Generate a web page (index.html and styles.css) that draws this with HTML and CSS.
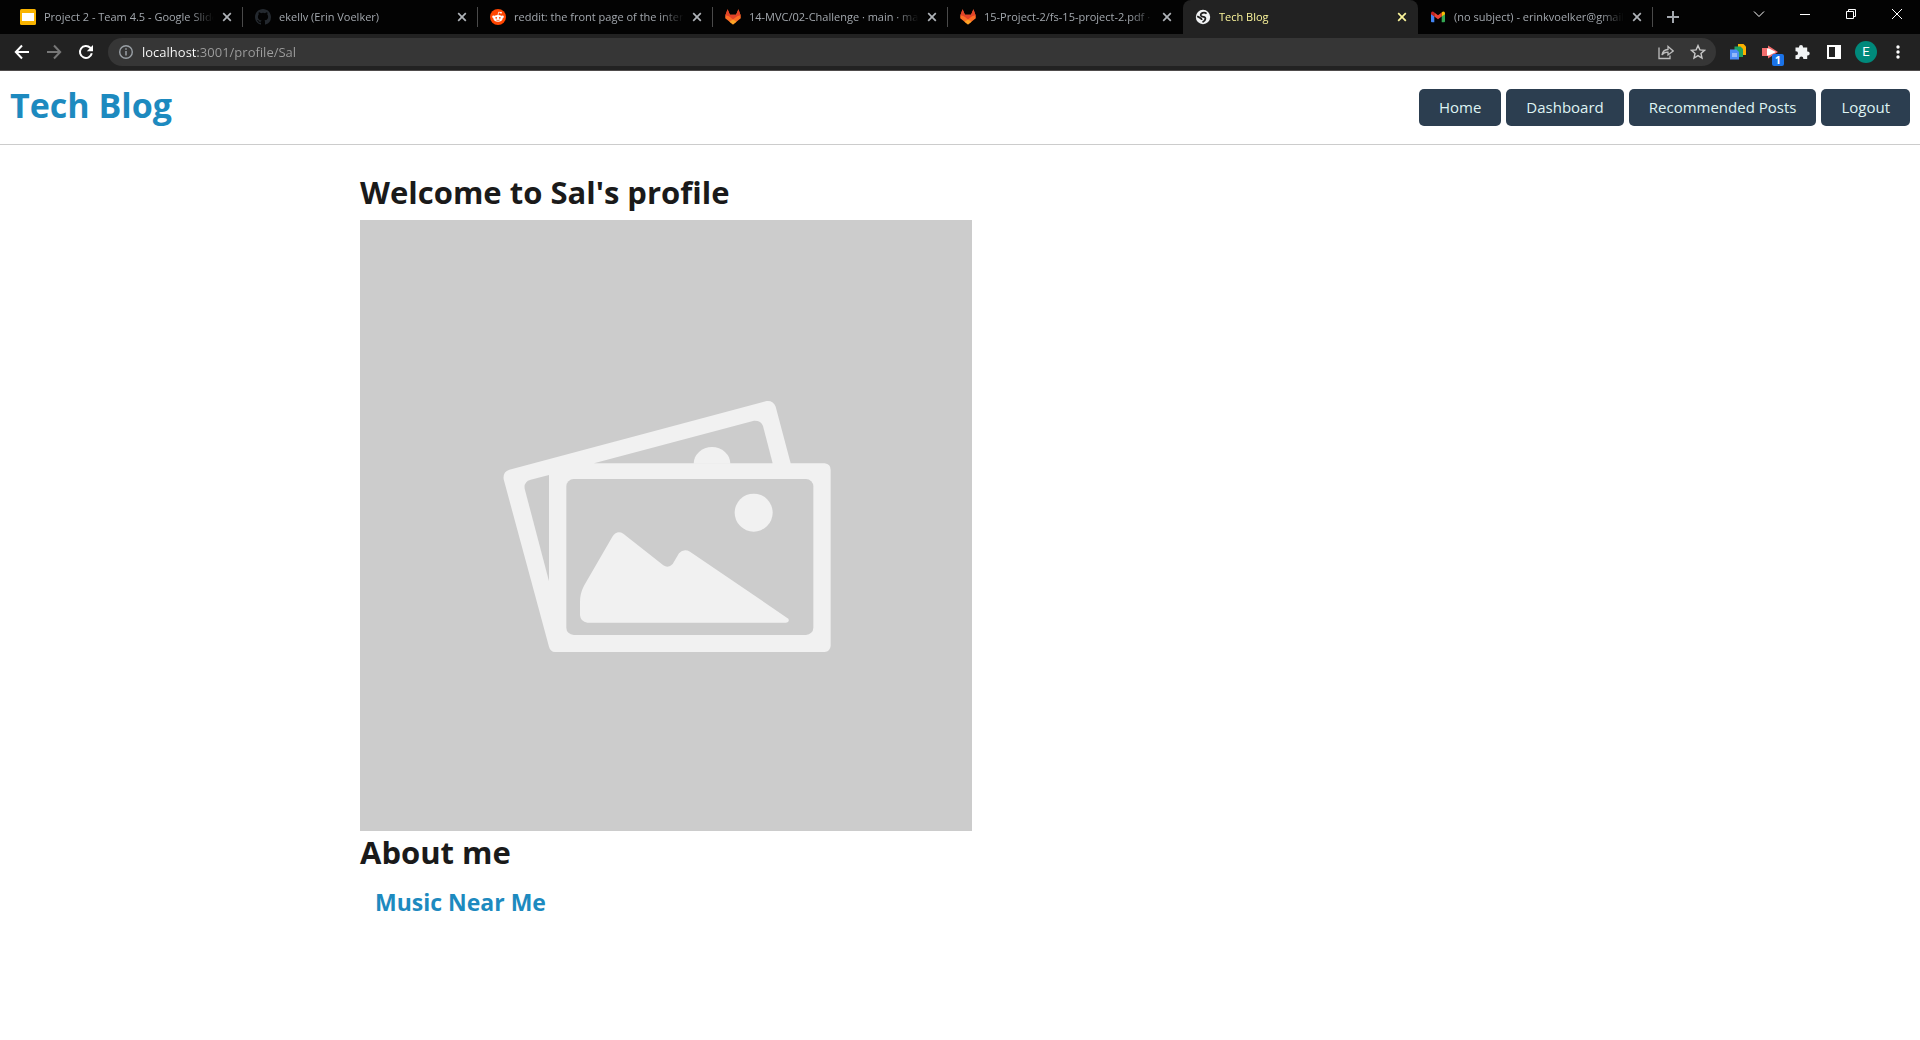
FILE: index.html
```html
<!DOCTYPE html>
<html lang="en">
<head>
<meta charset="utf-8">
<title>Tech Blog</title>
<link rel="stylesheet" href="styles.css">
</head>
<body>
<svg class="defs" aria-hidden="true">
  <symbol id="x" viewBox="0 0 10 10"><path d="M1.2 1.2l7.6 7.6M8.8 1.2L1.2 8.8" fill="none" stroke="currentColor" stroke-width="1.7"/></symbol>
  <symbol id="fox" viewBox="0 0 16 16">
    <path d="M2.6 0.3L0.3 6.5 0.2 9.3 8 15.6l7.8-6.3-.1-2.8L13.4.3l-2.3 5.4H4.9z" fill="#fc6d26"/>
    <path d="M2.6.3L.3 6.5Q3 6 5.3 8.3L8 10.4l2.7-2.1Q13 6 15.7 6.5L13.4.3l-2.3 5.4H4.9z" fill="#e24329"/>
    <path d="M8 10.4l3.6 2.4L8 15.6l-3.600-2.8z" fill="#fca326"/>
  </symbol>
</svg>

<div class="browser">
  <div class="tabstrip">
    <div class="tabs">
      <div class="tab">
        <svg class="favicon" viewBox="0 0 16 16"><rect width="16" height="16" rx="1.500" fill="#f9b400"/><rect x="2" y="4" width="12" height="8" fill="#fff"/></svg>
        <span class="tab-title">Project 2 - Team 4.5 - Google Slides</span>
        <button class="tab-close" aria-label="Close tab"><svg><use href="#x"/></svg></button>
      </div>
      <div class="tab">
        <svg class="favicon" viewBox="0 0 16 16"><path fill="#24292f" d="M8 0C3.580 0 0 3.580 0 8c0 3.540 2.290 6.530 5.470 7.590.4.070.55-.17.55-.38 0-.19-.01-.82-.01-1.490-2.010.37-2.530-.49-2.690-.94-.09-.23-.48-.94-.82-1.130-.28-.15-.68-.52-.01-.53.63-.01 1.080.58 1.230.82.72 1.210 1.870.87 2.330.66.07-.52.28-.87.51-1.070-1.780-.2-3.640-.89-3.640-3.950 0-.87.31-1.590.82-2.150-.08-.2-.36-1.020.08-2.120 0 0 .67-.21 2.200.82a7.500 7.500 0 0 1 4 0c1.530-1.040 2.200-.82 2.200-.82.44 1.100.16 1.920.08 2.120.51.56.82 1.270.82 2.150 0 3.070-1.870 3.750-3.650 3.950.29.25.54.73.54 1.480 0 1.070-.01 1.930-.01 2.200 0 .21.15.46.55.38A8 8 0 0 0 16 8c0-4.420-3.580-8-8-8z"/></svg>
        <span class="tab-title">ekellv (Erin Voelker)</span>
        <button class="tab-close" aria-label="Close tab"><svg><use href="#x"/></svg></button>
      </div>
      <div class="tab">
        <svg class="favicon" viewBox="0 0 16 16"><circle cx="8" cy="8" r="8" fill="#ff4500"/><ellipse cx="8" cy="9.300" rx="4.600" ry="3.400" fill="#fff"/><circle cx="3.400" cy="7.800" r="1.200" fill="#fff"/><circle cx="12.600" cy="7.800" r="1.200" fill="#fff"/><path d="M8 6l.7-2.900 2.200.5" fill="none" stroke="#fff" stroke-width=".8"/><circle cx="11" cy="3.700" r=".9" fill="#fff"/><circle cx="6.200" cy="8.800" r=".9" fill="#ff4500"/><circle cx="9.800" cy="8.800" r=".9" fill="#ff4500"/><path d="M6.200 11q1.800 1 3.600 0" fill="none" stroke="#ff4500" stroke-width=".7"/></svg>
        <span class="tab-title">reddit: the front page of the internet</span>
        <button class="tab-close" aria-label="Close tab"><svg><use href="#x"/></svg></button>
      </div>
      <div class="tab">
        <svg class="favicon"><use href="#fox"/></svg>
        <span class="tab-title">14-MVC/02-Challenge · main · main</span>
        <button class="tab-close" aria-label="Close tab"><svg><use href="#x"/></svg></button>
      </div>
      <div class="tab before-active">
        <svg class="favicon"><use href="#fox"/></svg>
        <span class="tab-title">15-Project-2/fs-15-project-2.pdf · main</span>
        <button class="tab-close" aria-label="Close tab"><svg><use href="#x"/></svg></button>
      </div>
      <div class="tab active">
        <svg class="favicon" viewBox="0 0 16 16"><circle cx="8" cy="8" r="7.200" fill="#f1f3f4"/><path d="M11.600 4.600Q9.800 3 7.600 3.800 5 4.900 6 6.700q.7 1 2.500 1.200 2 .3 1.900 2-.2 2.200-2.900 3.300M2.200 7.200l2.800 1.600q1.600.4 1.800 2.200" fill="none" stroke="#202020" stroke-width="1.800"/></svg>
        <span class="tab-title">Tech Blog</span>
        <button class="tab-close" aria-label="Close tab"><svg><use href="#x"/></svg></button>
      </div>
      <div class="tab">
        <svg class="favicon" viewBox="0 0 16 16"><path d="M1 4v8.300q0 .9.900.9H4.300V7z" fill="#4285f4"/><path d="M15 4v8.300q0 .9-.9.900h-2.400V7z" fill="#34a853"/><path d="M1 4.500q0-1.700 1.500-1.900 1 0 1.800.8v4L1 5.300z" fill="#c5221f"/><path d="M4.300 3.400L8 6.200l3.700-2.800v4L8 10.200 4.300 7.400z" fill="#ea4335"/><path d="M15 4.500q0-1.700-1.500-1.900-1 0-1.800.8v4L15 5.300z" fill="#fbbc04"/></svg>
        <span class="tab-title">(no subject) - erinkvoelker@gmail.com</span>
        <button class="tab-close" aria-label="Close tab"><svg><use href="#x"/></svg></button>
      </div>
      <button class="new-tab" aria-label="New tab"><svg width="12" height="12" viewBox="0 0 12 12"><path d="M6 0v12M0 6h12" stroke="currentColor" stroke-width="2"/></svg></button>
    </div>
    <div class="window-controls">
      <button aria-label="Search tabs"><svg width="12" height="12" viewBox="0 0 12 12"><path d="M1 3.500l5 5 5-5"/></svg></button>
      <button aria-label="Minimize"><svg width="12" height="12" viewBox="0 0 12 12"><path d="M1 6.500h10"/></svg></button>
      <button aria-label="Restore"><svg width="12" height="12" viewBox="0 0 12 12"><path d="M1.500 3.500h7v7h-7zM3.500 3.500v-2h7v7h-2"/></svg></button>
      <button aria-label="Close window"><svg width="12" height="12" viewBox="0 0 12 12"><path d="M1 1l10 10M11 1L1 11"/></svg></button>
    </div>
  </div>

  <div class="toolbar">
    <button class="tool" aria-label="Back"><svg width="16" height="16" viewBox="0 0 16 16"><path d="M15 8H2.500M8 1.500L1.800 8 8 14.500" fill="none" stroke="#fff" stroke-width="2"/></svg></button>
    <button class="tool" aria-label="Forward"><svg width="16" height="16" viewBox="0 0 16 16"><path d="M1 8h12.500M8 1.500L14.200 8 8 14.500" fill="none" stroke="#777" stroke-width="2"/></svg></button>
    <button class="tool" aria-label="Reload"><svg width="16" height="16" viewBox="0 0 16 16"><path d="M13.800 9.300A6 6 0 1 1 12.300 3.800L14 5.500" fill="none" stroke="#fff" stroke-width="2"/><path d="M15 1v6.200H8.800z" fill="#fff"/></svg></button>
    <div class="omnibox">
      <button class="tool" aria-label="Site information"><svg width="16" height="16" viewBox="0 0 16 16"><circle cx="8" cy="8" r="6.300" fill="none" stroke="#9aa0a6" stroke-width="1.400"/><path d="M8 7v4.500M8 4.300v1.500" stroke="#9aa0a6" stroke-width="1.500"/></svg></button>
      <input class="url" type="text" aria-label="Address" value="localhost:3001/profile/Sal">
      <button class="tool" aria-label="Share"><svg width="16" height="16" viewBox="0 0 16 16" fill="none" stroke="#bdbdbd" stroke-width="1.300"><path d="M1 3.500v11h11v-3"/><path d="M4 11q.5-5 6-5.500V2.500L15.200 7 10 11V8.200Q6 8 4 11z"/></svg></button>
      <button class="tool" aria-label="Bookmark"><svg width="16" height="16" viewBox="0 0 16 16"><path d="M8 1.600l1.900 4.300 4.600.4L11 9.400l1 4.600-4-2.400L4 14l1-4.600L1.500 6.300l4.600-.4z" fill="none" stroke="#c7c7c7" stroke-width="1.400"/></svg></button>
    </div>
    <div class="extensions">
      <button class="tool" aria-label="Docs"><svg width="16" height="16" viewBox="0 0 16 16"><path d="M8 0h5.500L16 2.500V11H8z" fill="#fbb100"/><path d="M4.500 2.500h6L13 5v8H4.500z" fill="#1ea362"/><path d="M0 5.500h6.500L9 8v7.500H0z" fill="#4c8bf5"/><path d="M2 10h5M2 12h5" stroke="#dce8ff"/></svg></button>
      <button class="tool has-badge" aria-label="Recorder"><svg width="16" height="16" viewBox="0 0 16 16"><path d="M0 4h6V1.500L16 8 6 14.500V12H0z" fill="#f46e6e"/><path d="M5 4.500h2L14 8l-7 3.500H5z" fill="#fff"/></svg><span class="badge">1</span></button>
      <button class="tool" aria-label="Extensions"><svg width="16" height="16" viewBox="0 0 16 16"><path d="M1.500 3.500H5V3a2 2 0 0 1 4 0v.5h4.200V7.500h.5a2 2 0 0 1 0 4h-.5V15H9.300v-.5a2 2 0 0 0-4 0V15H1.500v-3.800H2a2 2 0 0 0 0-4h-.5z" fill="#f1f3f4"/></svg></button>
      <button class="tool" aria-label="Side panel"><svg width="16" height="16" viewBox="0 0 16 16"><path d="M1 1h14v14H1zM3 3v10h6V3z" fill="#fff" fill-rule="evenodd"/></svg></button>
      <button class="tool" aria-label="Profile"><span class="avatar">E</span></button>
      <button class="tool" aria-label="Menu"><svg width="16" height="16" viewBox="0 0 16 16" fill="#fff"><circle cx="8" cy="3" r="1.700"/><circle cx="8" cy="8" r="1.700"/><circle cx="8" cy="13" r="1.700"/></svg></button>
    </div>
  </div>
</div>

<header class="site-header">
  <h1><a href="#">Tech Blog</a></h1>
  <nav>
    <a href="#">Home</a>
    <a href="#">Dashboard</a>
    <a href="#">Recommended Posts</a>
    <a href="#">Logout</a>
  </nav>
</header>

<main>
  <h2>Welcome to Sal's profile</h2>
  <svg class="photo" viewBox="-360 -480 1836 1833" role="img" aria-label="Profile picture">
    <rect x="-360" y="-480" width="1836" height="1833" fill="#ccc"/>
    <g fill="#f1f1f1">
      <path d="M207 800L71 298Q68 275 88 269L860 63Q880 61 887 80L932 250H1034Q1052 252 1052 270V798Q1050 815 1034 816H225Q211 815 207 800Z"/>
    </g>
    <g fill="#ccc">
      <path d="M342 250L822 122Q843 121 849 138L878 250Z"/>
      <path d="M207 285L152 299Q131 305 134 326L207 604Z"/>
      <rect x="259" y="297" width="741" height="468" rx="22"/>
    </g>
    <g fill="#f1f1f1">
      <path d="M641 251A55 50 0 0 1 751 251Z"/>
      <circle cx="821" cy="398" r="57"/>
      <path d="M300 665Q300 640 312 617L398 469Q411 450 430 461L550 556Q565 566 578 552L597 520Q611 505 630 515L925 716Q930 727 918 728H322Q302 726 300 706Z"/>
    </g>
  </svg>
  <h2>About me</h2>
  <h3><a href="#">Music Near Me</a></h3>
</main>
</body>
</html>
```
FILE: styles.css
```css
* { box-sizing: border-box; }

body {
  margin: 0;
  background: #fff;
  color: #1a1a1a;
  font: 15px/24px "Open Sans", "Noto Sans", sans-serif;
}

a { color: inherit; text-decoration: none; }

button {
  padding: 0;
  border: 0;
  background: none;
  color: inherit;
  font: inherit;
}

svg { display: block; }
.defs { display: none; }

/* Browser frame */
.browser {
  color: #a3a8ae;
  font-size: 11px;
  line-height: 16px;
}

.tabstrip {
  display: flex;
  justify-content: space-between;
  height: 34px;
  padding-left: 8px;
  background: #030303;
}

.tabs {
  display: flex;
  flex: 1;
  min-width: 0;
}

.tab {
  display: flex;
  flex: 0 1 235px;
  align-items: center;
  min-width: 0;
  padding: 0 11px 0 12px;
  background: linear-gradient(#4a4a4a, #4a4a4a) no-repeat right 7px / 1px 20px;
}

.tab.before-active { background: none; }

.tab.active {
  border-radius: 8px 8px 0 0;
  background: #222;
  color: #fbf59b;
}

.favicon {
  flex: none;
  width: 16px;
  height: 16px;
}

.tab-title {
  flex: 1;
  min-width: 0;
  margin: 0 8px;
  overflow: hidden;
  white-space: nowrap;
  -webkit-mask-image: linear-gradient(to right, #000 calc(100% - 24px), transparent);
  mask-image: linear-gradient(to right, #000 calc(100% - 24px), transparent);
}

.tab-close svg { width: 10px; height: 10px; }
.tab-close { color: #b0b4b9; }
.active .tab-close { color: #fbf59b; }

.new-tab { width: 40px; display: grid; place-items: center; }

.window-controls {
  display: flex;
  height: 28px;
}

.window-controls button {
  display: grid;
  place-items: center;
  width: 46px;
}

.window-controls path { fill: none; stroke: #fff; }

.toolbar {
  display: flex;
  align-items: center;
  height: 37px;
  padding: 0 6px;
  border-bottom: 1px solid #4f4c4c;
  background: #222;
}

.tool {
  display: grid;
  flex: none;
  place-items: center;
  width: 32px;
  height: 28px;
}

.omnibox {
  display: flex;
  flex: 1;
  align-items: center;
  height: 28px;
  margin: 0 6px;
  padding: 0 2px;
  border-radius: 14px;
  background: #363636;
}

.url {
  flex: 1;
  min-width: 0;
  padding: 0;
  border: 0;
  outline: 0;
  background: linear-gradient(to right, #fff 56px, #9e9e9e 56px);
  -webkit-background-clip: text;
  background-clip: text;
  color: transparent;
  font: 13px/20px "Open Sans", "Noto Sans", sans-serif;
}

.extensions { display: flex; }

.has-badge { position: relative; }

.badge {
  position: absolute;
  right: 2px;
  bottom: 0;
  width: 12px;
  height: 12px;
  border-radius: 2px;
  background: #1a73e8;
  color: #fff;
  font-size: 11px;
  font-weight: 700;
  line-height: 12px;
}

.avatar {
  width: 22px;
  height: 22px;
  border-radius: 50%;
  background: #00897b;
  color: #fff;
  font: 13px/22px Roboto, sans-serif;
}

/* Page */
.site-header {
  display: flex;
  align-items: center;
  justify-content: space-between;
  padding: 8px 10px;
  border-bottom: 1px solid #ccc;
}

h1, h2, h3 { margin: 0; font-weight: 700; }

h1 {
  padding-bottom: 5px;
  color: #1d8abf;
  font-size: 34px;
  line-height: 52px;
}

nav { display: flex; gap: 5px; }

nav a {
  padding: 6px 20px;
  border-radius: 5px;
  background: #2c3e50;
  color: #dff3f3;
  line-height: 25px;
}

main {
  max-width: 1200px;
  margin: 0 auto;
  padding-top: 26px;
}

h2 { font-size: 31px; line-height: 42px; }

.photo {
  width: 51%;
  height: auto;
  margin-top: 7px;
}

h3 {
  padding: 10px 15px;
  color: #1d8abf;
  font-size: 23px;
  line-height: 38px;
}
```
